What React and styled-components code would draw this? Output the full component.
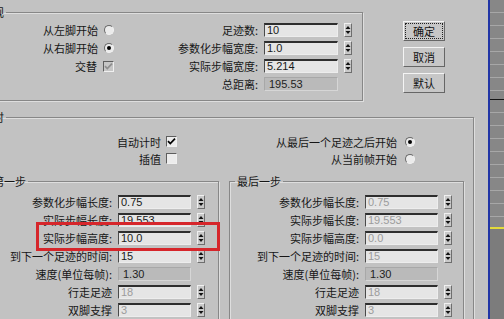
import React from "react";
import styled, { createGlobalStyle, css } from "styled-components";

const Global = createGlobalStyle`
  html, body { margin: 0; padding: 0; background: #c2c2c2; }
  body {
    font-family: "Liberation Sans", "Noto Sans CJK SC", sans-serif;
    font-size: 11px;
    color: #161616;
  }
`;

const Screen = styled.div`
  width: 504px;
  height: 319px;
  overflow: hidden;
  display: flex;
  background: #c2c2c2;
`;

const Dialog = styled.div`
  flex: 0 0 514px;
  margin-left: -26px;
  display: flex;
  flex-direction: column;
  padding-top: 6px;
  box-sizing: border-box;
`;

const TopSection = styled.div`
  display: flex;
  align-items: flex-start;
`;

const Group = styled.fieldset`
  margin: ${(p) => p.$mt || 0}px 0 0 0;
  padding: 0;
  min-width: 0;
  min-inline-size: 0;
  box-sizing: border-box;
  width: ${(p) => p.$w}px;
  flex: none;
  border: 1px solid #878787;
  box-shadow: inset 1px 1px 0 #dedede, 1px 1px 0 #dedede;
`;

const Legend = styled.legend`
  margin-left: ${(p) => (p.$ml === undefined ? 5 : p.$ml)}px;
  padding: 0 2px;
  font-size: 11px;
  line-height: 12px;
  font-family: "Noto Sans CJK SC", sans-serif;
`;

const GeneralBody = styled.div`
  display: flex;
  padding: 3px 10px 7px 0;
`;

const OptionCol = styled.div`
  width: ${(p) => p.$w}px;
  flex: none;
  display: flex;
  flex-direction: column;
`;

const OptionRow = styled.div`
  height: ${(p) => p.$h || 18}px;
  display: flex;
  align-items: center;
  justify-content: flex-end;
  gap: ${(p) => p.$gap || 6}px;
  white-space: nowrap;
  font-family: "Noto Sans CJK SC", sans-serif;
  line-height: 12px;
`;

const FieldGrid = styled.div`
  display: grid;
  grid-template-columns: ${(p) => p.$cols};
  grid-auto-rows: 18px;
  column-gap: 6px;
  align-items: center;
  flex: ${(p) => (p.$grow ? 1 : "none")};
`;

const Label = styled.div`
  text-align: right;
  white-space: nowrap;
  font-family: "Noto Sans CJK SC", sans-serif;
  line-height: 12px;
`;

const Field = styled.div`
  height: 14px;
  box-sizing: border-box;
  border-style: solid;
  border-width: 2px 1px 1px 1px;
  border-color: #2e2e2e #ededed #ededed #4a4a4a;
  background: #e5e5e5;
  padding-left: 2px;
  font-size: 11px;
  line-height: 11px;
  white-space: nowrap;
  color: ${(p) => (p.$disabled ? "#9c9c9c" : "#1a1a1a")};
`;

const ReadOnly = styled.div`
  height: 14px;
  box-sizing: border-box;
  border: 1px solid;
  border-color: #a8a8a8 #d6d6d6 #d6d6d6 #a8a8a8;
  background: #bababa;
  padding-left: 4px;
  font-size: 11px;
  line-height: 12px;
  color: #222;
`;

const SpinBox = styled.div`
  width: 8px;
  height: 14px;
  box-sizing: border-box;
  border: 1px solid;
  border-color: #f0f0f0 #6e6e6e #6e6e6e #f0f0f0;
  background: #c9c9c9;
  display: flex;
  align-items: center;
  justify-content: center;
`;

const Spinner = () => (
  <SpinBox>
    <svg width="6" height="10" viewBox="0 0 6 10">
      <path d="M3 1 L5.5 4 L0.5 4 Z" fill="#111" />
      <path d="M3 9 L5.5 6 L0.5 6 Z" fill="#111" />
    </svg>
  </SpinBox>
);

const Radio = styled.span`
  width: 10px;
  height: 10px;
  flex: none;
  box-sizing: border-box;
  border-radius: 50%;
  border: 1px solid;
  border-color: #686868 #f2f2f2 #f2f2f2 #686868;
  background: #ebebeb;
  display: inline-flex;
  align-items: center;
  justify-content: center;
  &::after {
    content: "";
    width: 4px;
    height: 4px;
    border-radius: 50%;
    background: ${(p) => (p.$on ? "#000" : "transparent")};
  }
`;

const CheckBox = styled.span`
  width: 11px;
  height: 11px;
  flex: none;
  box-sizing: border-box;
  border: 1px solid;
  border-color: #5e5e5e #f0f0f0 #f0f0f0 #5e5e5e;
  background: ${(p) => (p.$disabled ? "#c6c6c6" : "#ececec")};
  display: inline-flex;
  align-items: center;
  justify-content: center;
`;

const Check = ({ on, disabled }) => (
  <CheckBox $disabled={disabled}>
    {on && (
      <svg width="9" height="9" viewBox="0 0 9 9">
        <path
          d="M1 4.2 L3.3 6.6 L8 1.6"
          fill="none"
          stroke={disabled ? "#8e8e8e" : "#000"}
          strokeWidth="1.7"
        />
      </svg>
    )}
  </CheckBox>
);

const ButtonCol = styled.div`
  display: flex;
  flex-direction: column;
  gap: 6px;
  margin: 15px 0 0 40px;
`;

const Button = styled.button`
  width: 42px;
  height: 20px;
  padding: 0;
  box-sizing: border-box;
  font-family: "Noto Sans CJK SC", sans-serif;
  font-size: 11px;
  line-height: 12px;
  color: #111;
  background: #c7c7c7;
  border: 1px solid;
  border-color: #f4f4f4 #666 #666 #f4f4f4;
  position: relative;
  ${(p) =>
    p.$focus &&
    css`
      &::after {
        content: "";
        position: absolute;
        inset: 1px;
        border: 1px dotted #222;
      }
    `}
`;

const TimingBody = styled.div`
  padding: 10px 10px 0 13px;
`;

const TimingOptions = styled.div`
  display: flex;
`;

const SubGroups = styled.div`
  display: flex;
  gap: 10px;
  margin-top: 8px;
`;

const SubBody = styled.div`
  display: flex;
  padding: 6px ${(p) => p.$pr}px 30px 0;
`;

const RedBox = styled.div`
  position: absolute;
  left: 47px;
  right: -15px;
  top: -7px;
  bottom: -4px;
  border: 3px solid #d6262b;
  pointer-events: none;
`;

const RowWrap = styled.div`
  grid-column: 1 / -1;
  position: relative;
  display: grid;
  grid-template-columns: ${(p) => p.$cols};
  column-gap: 6px;
  align-items: center;
  height: 18px;
`;

const Timeline = styled.div`
  flex: 0 0 14px;
  display: flex;
  flex-direction: column;
  border-left: 2px solid #2135a6;
`;

const Track = styled.div`
  height: ${(p) => p.$h}px;
  flex: none;
  background: repeating-linear-gradient(
    to bottom,
    #878787 0px,
    #878787 12px,
    #a7a7a7 12px,
    #a7a7a7 13px
  );
`;

const Rule = styled.div`
  height: ${(p) => p.$h}px;
  flex: none;
  background: ${(p) => p.$c};
`;

const TrackEnd = styled.div`
  flex: 1;
  background: #7c7c7c;
`;

const generalFields = [
  { label: "足迹数:", value: "10" },
  { label: "参数化步幅宽度:", value: "1.0" },
  { label: "实际步幅宽度:", value: "5.214" },
  { label: "总距离:", value: "195.53", readOnly: true },
];

const firstStep = [
  { label: "参数化步幅长度:", value: "0.75" },
  { label: "实际步幅长度:", value: "19.553" },
  { label: "实际步幅高度:", value: "10.0", highlight: true },
  { label: "到下一个足迹的时间:", value: "15" },
  { label: "速度(单位每帧):", value: "1.30", readOnly: true },
  { label: "行走足迹", value: "18", disabled: true },
  { label: "双脚支撑", value: "3", disabled: true },
];

const lastStep = [
  { label: "参数化步幅长度:", value: "0.75", disabled: true },
  { label: "实际步幅长度:", value: "19.553", disabled: true },
  { label: "实际步幅高度:", value: "0.0", disabled: true },
  { label: "到下一个足迹的时间:", value: "15", disabled: true },
  { label: "速度(单位每帧):", value: "1.30", readOnly: true },
  { label: "行走足迹", value: "18", disabled: true },
  { label: "双脚支撑", value: "3", disabled: true },
];

const FieldCells = ({ f }) => (
  <>
    <Label>{f.label}</Label>
    {f.readOnly ? (
      <ReadOnly>{f.value}</ReadOnly>
    ) : (
      <Field $disabled={f.disabled}>{f.value}</Field>
    )}
    {f.readOnly ? <span /> : <Spinner />}
  </>
);

const FieldList = ({ fields, cols }) => (
  <FieldGrid $cols={cols} $grow>
    {fields.map((f) =>
      f.highlight ? (
        <RowWrap key={f.label} $cols={cols}>
          <FieldCells f={f} />
          <RedBox />
        </RowWrap>
      ) : (
        <FieldCells key={f.label} f={f} />
      )
    )}
  </FieldGrid>
);

export default function App() {
  return (
    <>
      <Global />
      <Screen>
        <Dialog>
          <TopSection>
            <Group $w={389}>
              <Legend>常规</Legend>
              <GeneralBody>
                <OptionCol $w={139}>
                  <OptionRow>
                    从左脚开始 <Radio />
                  </OptionRow>
                  <OptionRow>
                    从右脚开始 <Radio $on />
                  </OptionRow>
                  <OptionRow>
                    交替 <Check on disabled />
                  </OptionRow>
                </OptionCol>
                <FieldGrid $cols="144px 74px 8px">
                  {generalFields.map((f) => (
                    <FieldCells key={f.label} f={f} />
                  ))}
                </FieldGrid>
              </GeneralBody>
            </Group>
            <ButtonCol>
              <Button $focus>确定</Button>
              <Button>取消</Button>
              <Button>默认</Button>
            </ButtonCol>
          </TopSection>

          <Group $w={500} $mt={10}>
            <Legend>计时</Legend>
            <TimingBody>
              <TimingOptions>
                <OptionCol $w={189}>
                  <OptionRow $h={17} $gap={5}>
                    自动计时 <Check on />
                  </OptionRow>
                  <OptionRow $h={17} $gap={5}>
                    插值 <Check />
                  </OptionRow>
                </OptionCol>
                <OptionCol $w={238}>
                  <OptionRow $h={17} $gap={8}>
                    从最后一个足迹之后开始 <Radio $on />
                  </OptionRow>
                  <OptionRow $h={17} $gap={8}>
                    从当前帧开始 <Radio />
                  </OptionRow>
                </OptionCol>
              </TimingOptions>
              <SubGroups>
                <Group $w={231}>
                  <Legend $ml={2}>第一步</Legend>
                  <SubBody $pr={13}>
                    <FieldList fields={firstStep} cols="1fr 73px 8px" />
                  </SubBody>
                </Group>
                <Group $w={235}>
                  <Legend>最后一步</Legend>
                  <SubBody $pr={11}>
                    <FieldList fields={lastStep} cols="1fr 73px 8px" />
                  </SubBody>
                </Group>
              </SubGroups>
            </TimingBody>
          </Group>
        </Dialog>
        <Timeline>
          <Track $h={99} />
          <Rule $h={1} $c="#151515" />
          <Track $h={127} />
          <Rule $h={2} $c="#e3da3a" />
          <TrackEnd />
        </Timeline>
      </Screen>
    </>
  );
}
